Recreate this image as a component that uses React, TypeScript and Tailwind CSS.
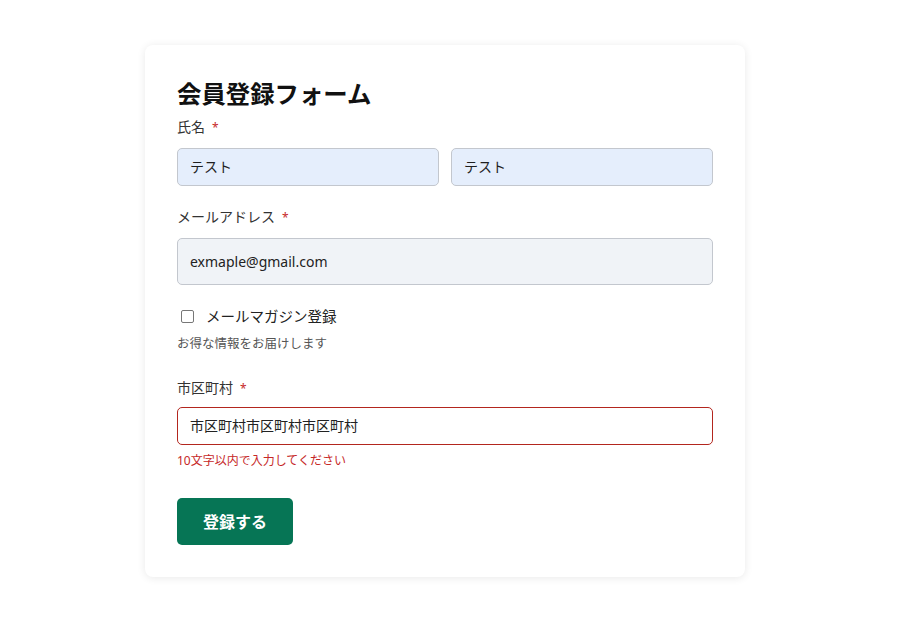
import React from "react";

export default function App() {
  return (
    <div
      className="min-h-[636px] w-full bg-white pt-[45px] pl-[145px]"
      style={{ fontFamily: '"Noto Sans", "Noto Sans CJK JP", sans-serif' }}
    >
      <div className="w-[600px] rounded-lg bg-white p-8 shadow-[0_1px_8px_rgba(0,0,0,0.09)] text-[#1f1f1f]">
        <h1
          className="text-[24.4px] leading-[32px] font-bold text-[#111]"
          style={{ fontFamily: '"Noto Sans CJK JP", sans-serif' }}
        >
          会員登録フォーム
        </h1>

        <div className="mt-[7px] text-[14px] leading-[21px] text-[#333]">
          氏名<span className="ml-[7px] text-[#c62828] text-[12px]">*</span>
        </div>
        <div className="mt-[10px] flex gap-3">
          <div className="h-[38px] flex-1 rounded-[5px] border border-[#c3c7ce] bg-[#e5eefc] px-[12px] text-[14px] leading-[36px]">
            テスト
          </div>
          <div className="h-[38px] flex-1 rounded-[5px] border border-[#c3c7ce] bg-[#e5eefc] px-[12px] text-[14px] leading-[36px]">
            テスト
          </div>
        </div>

        <div className="mt-[20px] text-[14px] leading-[21px] text-[#333]">
          メールアドレス<span className="ml-[7px] text-[#c62828] text-[12px]">*</span>
        </div>
        <div className="mt-[10px] h-[47px] rounded-[5px] border border-[#c3c7ce] bg-[#f0f3f7] px-[12px] text-[14px] leading-[45px] text-[#222]">
          exmaple@gmail.com
        </div>

        <div className="mt-[21px] flex items-center">
          <div className="ml-[4px] h-[13px] w-[13px] rounded-[2px] border border-[#777] bg-white" />
          <span className="ml-[12px] text-[14.5px] leading-[21px] text-[#222]">メールマガジン登録</span>
        </div>
        <div className="mt-[8px] text-[12.5px] leading-[18px] text-[#555]">お得な情報をお届けします</div>

        <div className="mt-[24px] text-[14px] leading-[21px] text-[#333]">
          市区町村<span className="ml-[7px] text-[#c62828] text-[12px]">*</span>
        </div>
        <div className="mt-[8px] h-[38px] rounded-[5px] border border-[#b3261e] bg-white px-[12px] text-[14px] leading-[36px] text-[#222]">
          市区町村市区町村市区町村
        </div>
        <div className="mt-[7px] text-[12px] leading-[18px] text-[#c62828]">10文字以内で入力してください</div>

        <button className="mt-[28px] h-[47px] w-[116px] rounded-[5px] bg-[#067555] text-[16px] font-bold text-white">
          登録する
        </button>
      </div>
    </div>
  );
}
